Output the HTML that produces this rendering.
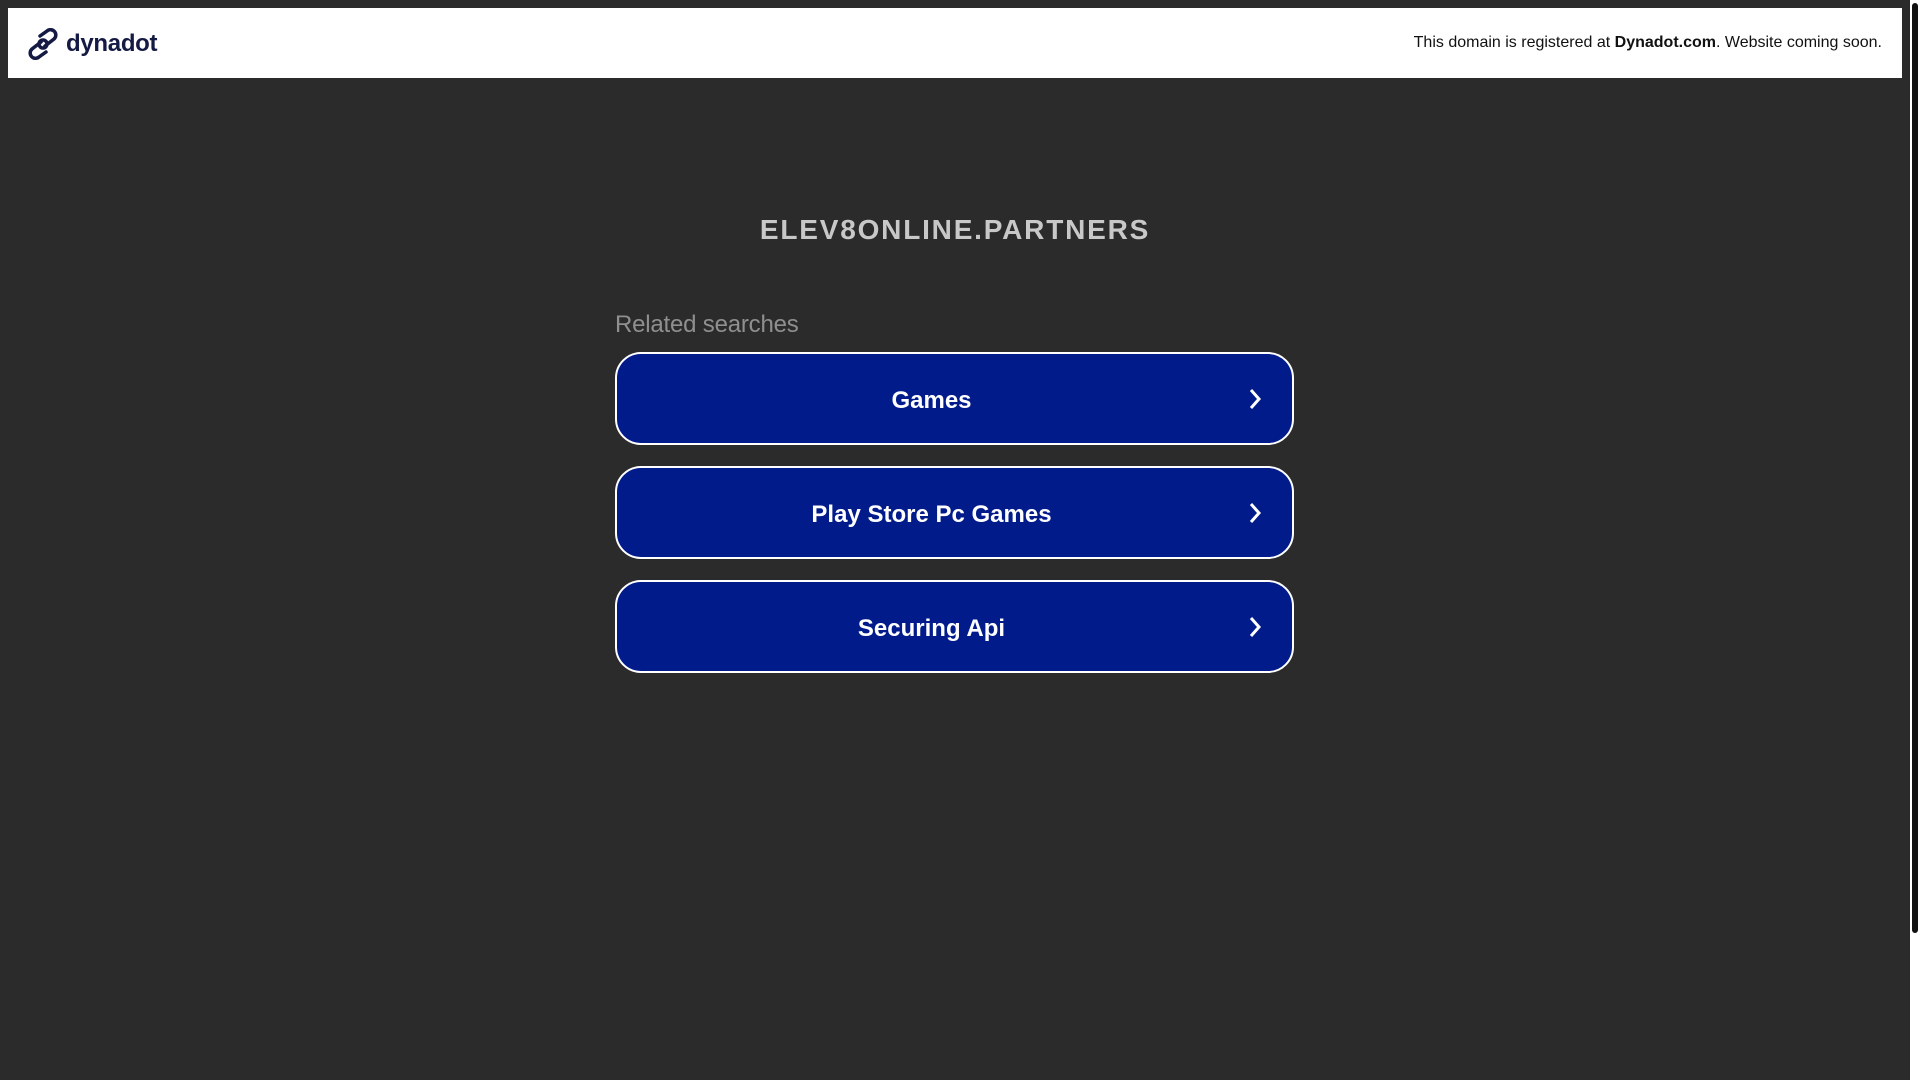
<!DOCTYPE html>
<html><head><meta charset="utf-8"><style>
html,body{margin:0;padding:0;}
body{width:1920px;height:1080px;background:#2b2b2b;position:relative;overflow:hidden;font-family:"Liberation Sans",Arial,sans-serif;}
.hdr{position:absolute;left:8px;top:8px;width:1894px;height:70px;background:#fff;}
.logo{position:absolute;left:19px;top:20px;display:flex;align-items:center;}
.logo span{font-weight:bold;font-size:24px;color:#141a43;margin-left:7px;letter-spacing:-0.3px;}
.rt{position:absolute;right:20px;top:26px;font-size:16px;color:#111;}
.title{position:absolute;left:0;width:1910px;top:214px;text-align:center;color:#c8c8c8;font-weight:bold;font-size:28px;letter-spacing:1.8px;}
.rel{position:absolute;left:615px;top:311px;color:#8f8f8f;font-size:24px;letter-spacing:-0.2px;}
.btn{position:absolute;left:615px;width:675px;height:89px;border:2px solid #fff;border-radius:26px;background:#011b8b;color:#fff;font-weight:bold;font-size:24px;}
.btn .t{position:absolute;left:0;right:46px;top:33px;text-align:center;}
.btn svg{position:absolute;right:30px;top:34px;}
.sb{position:absolute;left:1910px;top:0;width:10px;height:1080px;background:#fff;}
.th{position:absolute;left:1912px;top:3px;width:6px;height:930px;background:#111;border-radius:3px;}
</style></head><body>
<div class="hdr">
<div class="logo"><svg width="32" height="32" viewBox="0 0 32 32"><g fill="none" stroke="#141a43" stroke-width="3.5" stroke-linecap="round"><path d="M13 8 L20 3 A5 5 0 0 1 27 11 L18 18"/><path d="M19 24 L12 29 A5 5 0 0 1 5 21 L14 14"/><circle cx="16" cy="16" r="4"/></g></svg><span>dynadot</span></div>
<div class="rt">This domain is registered at <b>Dynadot.com</b>. Website coming soon.</div>
</div>
<div class="title">ELEV8ONLINE.PARTNERS</div>
<div class="rel">Related searches</div>
<div class="btn" style="top:352px"><div class="t">Games</div><svg width="14" height="22" viewBox="0 0 14 22"><path d="M3 2 L11 11 L3 20" fill="none" stroke="#fff" stroke-width="3"/></svg></div>
<div class="btn" style="top:466px"><div class="t">Play Store Pc Games</div><svg width="14" height="22" viewBox="0 0 14 22"><path d="M3 2 L11 11 L3 20" fill="none" stroke="#fff" stroke-width="3"/></svg></div>
<div class="btn" style="top:580px"><div class="t">Securing Api</div><svg width="14" height="22" viewBox="0 0 14 22"><path d="M3 2 L11 11 L3 20" fill="none" stroke="#fff" stroke-width="3"/></svg></div>
<div class="sb"></div><div class="th"></div>
</body></html>
